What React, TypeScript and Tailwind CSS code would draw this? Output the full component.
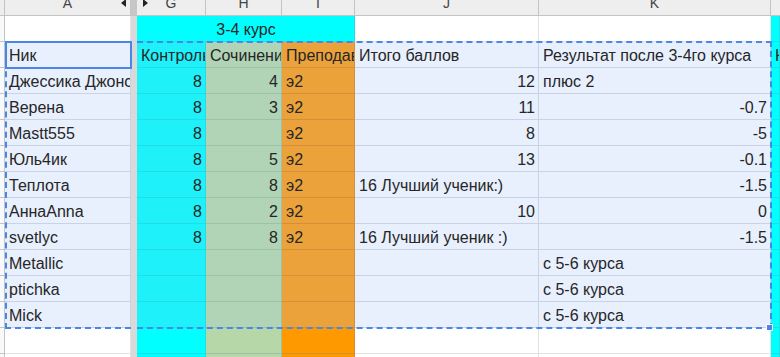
import React from "react";

type Cell = { t?: string; r?: boolean; bg: string; line: string; span?: number; center?: boolean };

const SW = "bg-[#e8f0fe]";
const SC = "bg-[#1ff1fa]";
const SG = "bg-[#b1d3b6]";
const SO = "bg-[#eca23a]";
const W = "bg-white";
const C = "bg-[#00ffff]";
const G = "bg-[#b6d7a8]";
const O = "bg-[#ff9900]";

const LSW = "border-[#c9d3e4]";
const LC = "border-[#22dde3]";
const LG = "border-[#9fc0a3]";
const LO = "border-[#d39038]";
const LW = "border-[#e2e2e2]";

const cols = "grid grid-cols-[5px_126px_6px_69px_76px_73px_184px_232px_9px]";

function CellView({ c }: { c: Cell }) {
  return (
    <div
      className={`${c.bg} ${c.line} border-r border-b h-[26px] overflow-hidden flex items-end pb-[2px] pl-[4px] pr-[3px] whitespace-nowrap ${
        c.r ? "justify-end" : c.center ? "justify-center" : "justify-start"
      } ${c.span === 3 ? "col-span-3" : ""}`}
    >
      <span className="leading-[19px]">{c.t ?? ""}</span>
    </div>
  );
}

function Row({ cells, divider = "bg-[#d9d9d9]" }: { cells: Cell[]; divider?: string }) {
  const [a, ...rest] = cells;
  return (
    <>
      <div className="h-[26px] bg-[#f8f9fa] border-r border-b border-[#c4c4c4]" />
      <CellView c={a} />
      <div className={`h-[26px] ${divider}`} />
      {rest.map((c, i) => (
        <CellView key={i} c={c} />
      ))}
    </>
  );
}

const dataRows: [string, string, string, string, string, boolean, string, boolean][] = [
  ["Джессика Джонс", "8", "4", "э2", "12", true, "плюс 2", false],
  ["Верена", "8", "3", "э2", "11", true, "-0.7", true],
  ["Mastt555", "8", "", "э2", "8", true, "-5", true],
  ["Юль4ик", "8", "5", "э2", "13", true, "-0.1", true],
  ["Теплота", "8", "8", "э2", "16 Лучший ученик:)", false, "-1.5", true],
  ["АннаAnna", "8", "2", "э2", "10", true, "0", true],
  ["svetlyc", "8", "8", "э2", "16 Лучший ученик :)", false, "-1.5", true],
  ["Metallic", "", "", "", "", false, "с 5-6 курса", false],
  ["ptichka", "", "", "", "", false, "с 5-6 курса", false],
  ["Mick", "", "", "", "", false, "с 5-6 курса", false],
];

function Tri({ dir }: { dir: "l" | "r" }) {
  return (
    <svg width="5" height="8" viewBox="0 0 5 8" className="block">
      {dir === "l" ? <polygon points="5,0 5,8 0,4" fill="#222" /> : <polygon points="0,0 0,8 5,4" fill="#222" />}
    </svg>
  );
}

export default function App() {
  const letters = ["A", "G", "H", "I", "J", "K"];
  return (
    <div
      className="relative w-[780px] h-[357px] overflow-hidden bg-white text-[16px] text-[#262626]"
      style={{ fontFamily: '"Liberation Sans", Arial, sans-serif' }}
    >
      <div className={cols}>
        {/* column header row */}
        <div className="h-[16px] bg-[#eeeeee] border-r border-b border-[#c4c4c4]" />
        <div className="relative h-[16px] bg-[#eeeeee] border-r border-b border-[#c4c4c4] flex items-end justify-center pb-[5px] text-[14px] text-[#444] leading-none">
          {letters[0]}
          <div className="absolute right-[4px] top-[-1px]">
            <Tri dir="l" />
          </div>
        </div>
        <div className="h-[16px] bg-[#c7c7c7] border-b border-[#c4c4c4]" />
        {letters.slice(1).map((x, i) => (
          <div
            key={x}
            className="relative h-[16px] bg-[#eeeeee] border-r border-b border-[#c4c4c4] flex items-end justify-center pb-[5px] text-[14px] text-[#444] leading-none"
          >
            {x}
            {i === 0 && (
              <div className="absolute left-[6px] top-[-1px]">
                <Tri dir="r" />
              </div>
            )}
          </div>
        ))}
        <div className="h-[16px] bg-[#eeeeee] border-b border-[#c4c4c4]" />

        {/* row 1 */}
        <Row
          cells={[
            { bg: W, line: LW },
            { t: "3-4 курс", bg: C, line: LC, span: 3, center: true },
            { bg: W, line: LW },
            { bg: W, line: LW },
            { bg: C, line: LC },
          ]}
        />

        {/* header row */}
        <Row
          cells={[
            { t: "Ник", bg: SW, line: LSW },
            { t: "Контрольная", bg: SC, line: LC },
            { t: "Сочинение", bg: SG, line: LG },
            { t: "Преподаватель", bg: SO, line: LO },
            { t: "Итого баллов", bg: SW, line: LSW },
            { t: "Результат после 3-4го курса", bg: SW, line: LSW },
            { t: "Контрольная", bg: C, line: LC },
          ]}
        />

        {dataRows.map((d, i) => (
          <Row
            key={i}
            cells={[
              { t: d[0], bg: SW, line: LSW },
              { t: d[1], r: true, bg: SC, line: LC },
              { t: d[2], r: true, bg: SG, line: LG },
              { t: d[3], bg: SO, line: LO },
              { t: d[4], r: d[5], bg: SW, line: LSW },
              { t: d[6], r: d[7], bg: SW, line: LSW },
              { bg: C, line: LC },
            ]}
          />
        ))}

        {[0, 1].map((i) => (
          <Row
            key={"e" + i}
            cells={[
              { bg: W, line: LW },
              { bg: C, line: LC },
              { bg: G, line: LG },
              { bg: O, line: LO },
              { bg: W, line: LW },
              { bg: W, line: LW },
              { bg: C, line: LC },
            ]}
          />
        ))}
      </div>

      {/* selection overlay: dashed border */}
      <div className="pointer-events-none absolute left-[5px] top-[41px] w-[126px] h-[288px] border-l-2 border-t-2 border-b-2 border-dashed border-[#4a86e8]" />
      <div className="pointer-events-none absolute left-[137px] top-[41px] w-[635px] h-[288px] border-r-2 border-t-2 border-b-2 border-dashed border-[#4a86e8]" />
      {/* active cell */}
      <div className="pointer-events-none absolute left-[5px] top-[41px] w-[127px] h-[28px] border-2 border-[#4a86e8]" />
      {/* fill handle */}
      <div className="pointer-events-none absolute left-[766px] top-[324px] w-[7px] h-[7px] bg-[#4a86e8] border border-white" />
    </div>
  );
}
